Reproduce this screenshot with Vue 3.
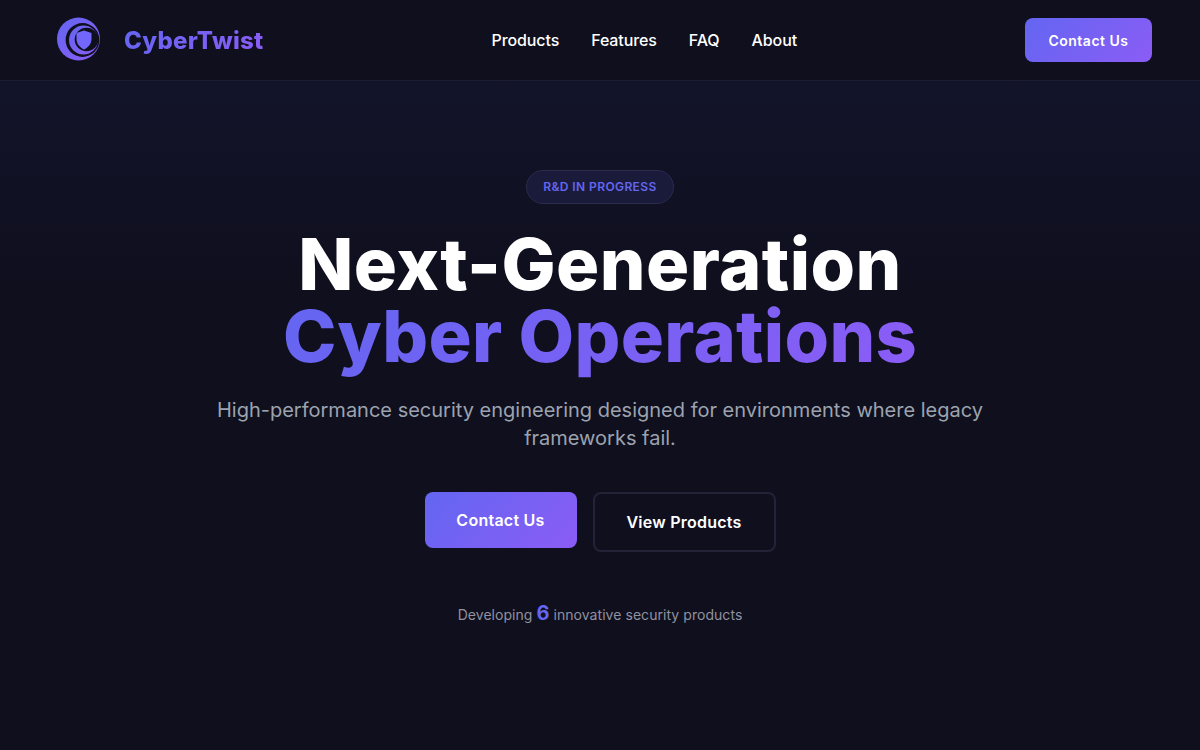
<script setup>
const navLinks = ['Products', 'Features', 'FAQ', 'About']
</script>

<template>
  <div class="page">
    <header class="nav">
      <a class="brand">
        <svg class="brand-icon" width="64" height="64" viewBox="0 0 64 64">
          <defs>
            <linearGradient id="logoFill" x1="0" y1="0" x2="1" y2="1">
              <stop offset="0" stop-color="#6366f1" />
              <stop offset="1" stop-color="#8b5cf6" />
            </linearGradient>
          </defs>
          <circle cx="30.500" cy="31" r="21.500" fill="url(#logoFill)" />
          <circle cx="34.500" cy="32" r="16.900" fill="#0f0f1d" />
          <circle cx="35.500" cy="32" r="14.500" fill="url(#logoFill)" />
          <circle cx="38.500" cy="31.500" r="11.800" fill="#0f0f1d" />
          <path d="M36 22.500 43.500 25V31C43.500 36 40 39.500 36 41.500 32 39.500 28.500 36 28.500 31V25Z" fill="#7366fb" />
        </svg>
        <span class="brand-name">CyberTwist</span>
      </a>
      <nav class="links">
        <a v-for="link in navLinks" :key="link" class="link">{{ link }}</a>
      </nav>
      <button class="nav-cta">Contact Us</button>
    </header>

    <main class="hero">
      <span class="badge">R&amp;D IN PROGRESS</span>
      <h1 class="title">
        <span class="title-main">Next-Generation</span><br />
        <span class="title-accent">Cyber Operations</span>
      </h1>
      <p class="lead">High-performance security engineering designed for environments where legacy frameworks fail.</p>
      <div class="actions">
        <button class="btn btn-primary">Contact Us</button>
        <button class="btn btn-outline">View Products</button>
      </div>
      <p class="stat">Developing <span class="stat-num">6</span> innovative security products</p>
    </main>
  </div>
</template>

<style>
html, body {
  margin: 0;
  background: #0f0f1e;
}
</style>

<style scoped>
.page {
  height: 750px;
  overflow: hidden;
  background: #0f0f1e;
  font-family: Inter, "Liberation Sans", sans-serif;
  color: #fff;
}

.nav {
  height: 80px;
  padding: 0 48px;
  display: flex;
  align-items: center;
  justify-content: space-between;
  background: #0f0f1d;
  border-bottom: 1px solid #1c1d31;
}

.brand {
  display: flex;
  align-items: center;
  gap: 12px;
}
.brand-icon {
  display: block;
}
.brand-name {
  font-size: 24px;
  font-weight: 800;
  letter-spacing: 0.3px;
  color: #7561f6;
  background: linear-gradient(135deg, #6366f1, #8b5cf6);
  -webkit-background-clip: text;
  background-clip: text;
  -webkit-text-fill-color: transparent;
}

.links {
  display: flex;
  gap: 32px;
}
.link {
  font-size: 16px;
  font-weight: 500;
  letter-spacing: -0.1px;
  color: #fff;
}

.nav-cta {
  width: 127px;
  height: 44px;
  border: 0;
  border-radius: 8px;
  background: linear-gradient(135deg, #6366f1, #8b5cf6);
  color: #fff;
  font-family: inherit;
  font-size: 14px;
  font-weight: 600;
  letter-spacing: 0.5px;
}

.hero {
  height: 669px;
  padding-top: 89px;
  box-sizing: border-box;
  display: flex;
  flex-direction: column;
  align-items: center;
  text-align: center;
  background: linear-gradient(180deg, #12142a 0%, #0f0f1e 30%);
}

.badge {
  box-sizing: border-box;
  height: 34px;
  padding: 0 16px 2px;
  display: flex;
  align-items: center;
  border: 1px solid #2a2b4d;
  border-radius: 17px;
  background: #1a1b3a;
  color: #6366f1;
  font-size: 12px;
  font-weight: 600;
  letter-spacing: 0.4px;
}

.title {
  margin: 24px 0 0;
  font-size: 72px;
  line-height: 72px;
  font-weight: 800;
  color: #fff;
}
.title-main {
  letter-spacing: 0.45px;
}
.title-accent {
  letter-spacing: 0.3px;
  background: linear-gradient(135deg, #6366f1, #8b5cf6);
  -webkit-background-clip: text;
  background-clip: text;
  -webkit-text-fill-color: transparent;
}

.lead {
  width: 800px;
  margin: 24px 0 0;
  font-size: 20px;
  line-height: 28px;
  color: #9ca3af;
}

.actions {
  margin-top: 40px;
  display: flex;
  align-items: flex-start;
  gap: 16px;
}
.btn {
  box-sizing: border-box;
  border-radius: 8px;
  color: #fff;
  font-family: inherit;
  font-size: 16px;
  font-weight: 600;
  letter-spacing: 0.25px;
}
.btn-primary {
  width: 152px;
  height: 56px;
  border: 0;
  background: linear-gradient(135deg, #6366f1, #8b5cf6);
}
.btn-outline {
  width: 183px;
  height: 60px;
  border: 2px solid #222336;
  background: transparent;
}

.stat {
  margin: 46px 0 0;
  font-size: 14px;
  line-height: 30px;
  letter-spacing: 0.05px;
  color: #91919f;
}
.stat-num {
  font-size: 20px;
  font-weight: 700;
  color: #6366f1;
}
</style>
